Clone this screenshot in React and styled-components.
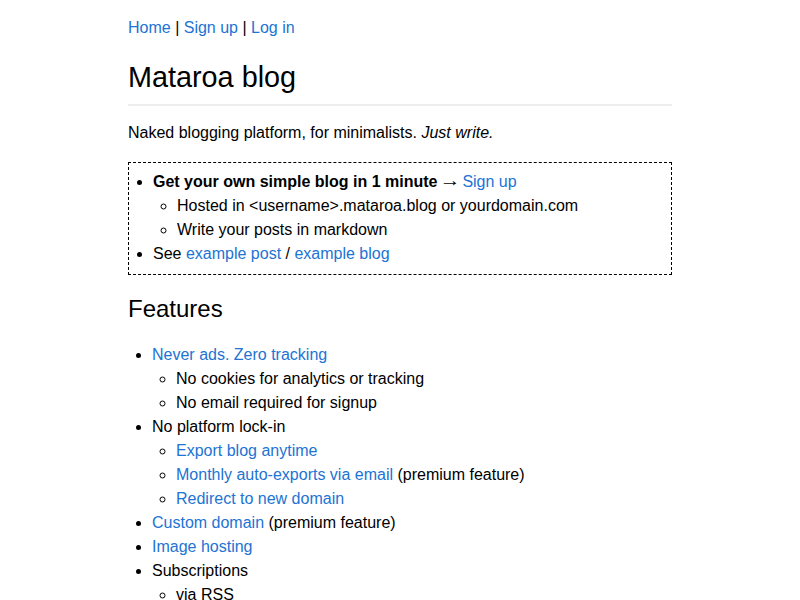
import styled, { createGlobalStyle } from 'styled-components';

const GlobalStyle = createGlobalStyle`
  body {
    margin: 0;
    background: #fff;
    color: #000;
    font-family: "Liberation Sans", Arial, sans-serif;
    font-size: 16px;
    line-height: 1.5;
  }
`;

const Page = styled.main`
  max-width: 544px;
  margin: 0 auto;
  padding-top: 16px;
`;

const Nav = styled.nav`
  line-height: 24px;
`;

const Link = styled.a`
  color: #2173d4;
  text-decoration: none;
`;

const Title = styled.h1`
  margin: 21px 0 15px;
  padding-bottom: 10px;
  border-bottom: 2px solid #eee;
  font-size: 28.8px;
  font-weight: 400;
  line-height: 33px;
`;

const Intro = styled.p`
  margin: 0 0 17px;
`;

const Callout = styled.section`
  border: 1px dashed #000;
  padding: 7px 0 8px;
`;

const List = styled.ul`
  margin: 0;
  padding-left: 24px;
  list-style: ${p => (p.$nested ? 'circle' : 'disc')};
`;

const Arrow = styled.span`
  display: inline-block;
  transform: scale(1.3, 1.1) translateY(-1px);
`;

const SectionTitle = styled.h2`
  margin: 20px 0;
  font-size: 24px;
  font-weight: 400;
  line-height: 27.6px;
`;

export default function App() {
  return (
    <>
      <GlobalStyle />
      <Page>
        <Nav>
          <Link href="#">Home</Link> | <Link href="#">Sign up</Link> | <Link href="#">Log in</Link>
        </Nav>

        <Title>Mataroa blog</Title>

        <Intro>
          Naked blogging platform, for minimalists. <em>Just write.</em>
        </Intro>

        <Callout>
          <List>
            <li>
              <strong>Get your own simple blog in 1 minute</strong> <Arrow>→</Arrow> <Link href="#">Sign up</Link>
              <List $nested>
                <li>Hosted in &lt;username&gt;.mataroa.blog or yourdomain.com</li>
                <li>Write your posts in markdown</li>
              </List>
            </li>
            <li>
              See <Link href="#">example post</Link> / <Link href="#">example blog</Link>
            </li>
          </List>
        </Callout>

        <SectionTitle>Features</SectionTitle>

        <List>
          <li>
            <Link href="#">Never ads. Zero tracking</Link>
            <List $nested>
              <li>No cookies for analytics or tracking</li>
              <li>No email required for signup</li>
            </List>
          </li>
          <li>
            No platform lock-in
            <List $nested>
              <li><Link href="#">Export blog anytime</Link></li>
              <li><Link href="#">Monthly auto-exports via email</Link> (premium feature)</li>
              <li><Link href="#">Redirect to new domain</Link></li>
            </List>
          </li>
          <li><Link href="#">Custom domain</Link> (premium feature)</li>
          <li><Link href="#">Image hosting</Link></li>
          <li>
            Subscriptions
            <List $nested>
              <li>via RSS</li>
              <li>via email newsletter</li>
            </List>
          </li>
        </List>
      </Page>
    </>
  );
}
